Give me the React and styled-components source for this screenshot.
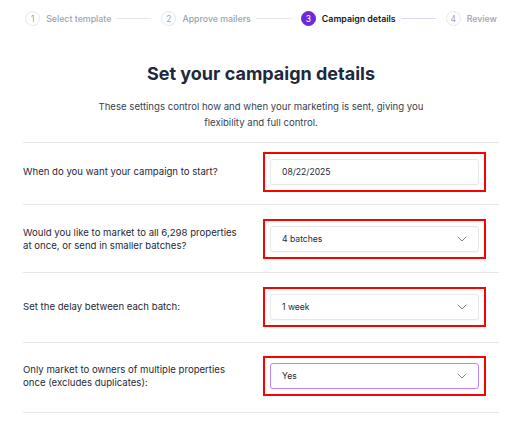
import React from "react";
import styled, { createGlobalStyle } from "styled-components";
import { ChevronDown } from "lucide-react";

const GlobalStyle = createGlobalStyle`
    body {
        margin: 0;
        background: #fff;
        font-family: Inter, "Noto Sans", sans-serif;
        -webkit-font-smoothing: antialiased;
    }
`;

const Page = styled.div`
    width: 522px;
    padding: 11px 23px 0;
    box-sizing: border-box;
`;

const Stepper = styled.div`
    display: flex;
    align-items: center;
    justify-content: center;
    height: 15px;
`;

const Step = styled.div`
    display: flex;
    align-items: center;
    gap: 6px;
`;

const Circle = styled.span`
    width: 15px;
    height: 15px;
    box-sizing: border-box;
    border-radius: 50%;
    display: flex;
    align-items: center;
    justify-content: center;
    font-size: 8.5px;
    border: 1px solid ${(p) => (p.$active ? "#6d28d9" : "#e5e7eb")};
    background: ${(p) => (p.$active ? "#6d28d9" : "#fff")};
    color: ${(p) => (p.$active ? "#fff" : "#9ca3af")};
`;

const StepLabel = styled.span`
    font-size: 8.8px;
    font-weight: ${(p) => (p.$active ? 600 : 500)};
    color: ${(p) => (p.$active ? "#111827" : "#9ca3af")};
    white-space: nowrap;
`;

const Connector = styled.span`
    width: 35px;
    height: 1px;
    margin: 0 10px 0 5px;
    background: ${(p) => (p.$active ? "#ddd6fe" : "#e5e7eb")};
`;

const Title = styled.h1`
    margin: 36px 0 0;
    text-align: center;
    font-size: 18px;
    font-weight: 700;
    color: #1e293b;
    line-height: 24px;
`;

const Subtitle = styled.p`
    margin: 13px auto 0;
    width: 340px;
    text-align: center;
    font-size: 9.6px;
    line-height: 16px;
    color: #374151;
`;

const Form = styled.div`
    margin-top: 11px;
    border-top: 1px solid #e5e7eb;
`;

const Row = styled.div`
    display: grid;
    grid-template-columns: 240px 1fr;
    align-items: center;
    border-bottom: 1px solid #e5e7eb;
    padding: ${(p) => p.$pad};
`;

const Label = styled.div`
    font-size: 9.6px;
    line-height: 13.5px;
    color: #1f2937;
    padding-right: 18px;
`;

const Highlight = styled.div`
    border: 2px solid #f00;
    padding: 5px;
    margin-right: 13px;
`;

const Field = styled.div`
    height: 26px;
    box-sizing: border-box;
    border: 1px solid ${(p) => (p.$focus ? "#c084fc" : "#e5e7eb")};
    border-radius: 3px;
    display: flex;
    align-items: center;
    justify-content: space-between;
    padding: 0 8px 0 11px;
    font-size: 8.6px;
    color: #1f2937;
    background: #fff;
    box-shadow: 0 1px 1px rgba(0, 0, 0, 0.03);
`;

const steps = [
    { n: 1, label: "Select template" },
    { n: 2, label: "Approve mailers" },
    { n: 3, label: "Campaign details", active: true },
    { n: 4, label: "Review" },
];

const rows = [
    { label: "When do you want your campaign to start?", value: "08/22/2025", pad: "9px 0 12px" },
    { label: "Would you like to market to all 6,298 properties at once, or send in smaller batches?", value: "4 batches", select: true, pad: "14px 0 13px" },
    { label: "Set the delay between each batch:", value: "1 week", select: true, pad: "14px 0 15px" },
    { label: "Only market to owners of multiple properties once (excludes duplicates):", value: "Yes", select: true, focus: true, pad: "13px 0 16px" },
];

export default function App() {
    return (
        <Page>
            <GlobalStyle />
            <Stepper>
                {steps.map((s, i) => (
                    <React.Fragment key={s.n}>
                        <Step>
                            <Circle $active={s.active}>{s.n}</Circle>
                            <StepLabel $active={s.active}>{s.label}</StepLabel>
                        </Step>
                        {i < steps.length - 1 && <Connector $active={s.active} />}
                    </React.Fragment>
                ))}
            </Stepper>
            <Title>Set your campaign details</Title>
            <Subtitle>
                These settings control how and when your marketing is sent, giving you flexibility and full control.
            </Subtitle>
            <Form>
                {rows.map((r) => (
                    <Row key={r.label} $pad={r.pad}>
                        <Label>{r.label}</Label>
                        <Highlight>
                            <Field $focus={r.focus}>
                                <span>{r.value}</span>
                                {r.select && <ChevronDown size={16} color="#6b7280" strokeWidth={1.3} />}
                            </Field>
                        </Highlight>
                    </Row>
                ))}
            </Form>
        </Page>
    );
}
